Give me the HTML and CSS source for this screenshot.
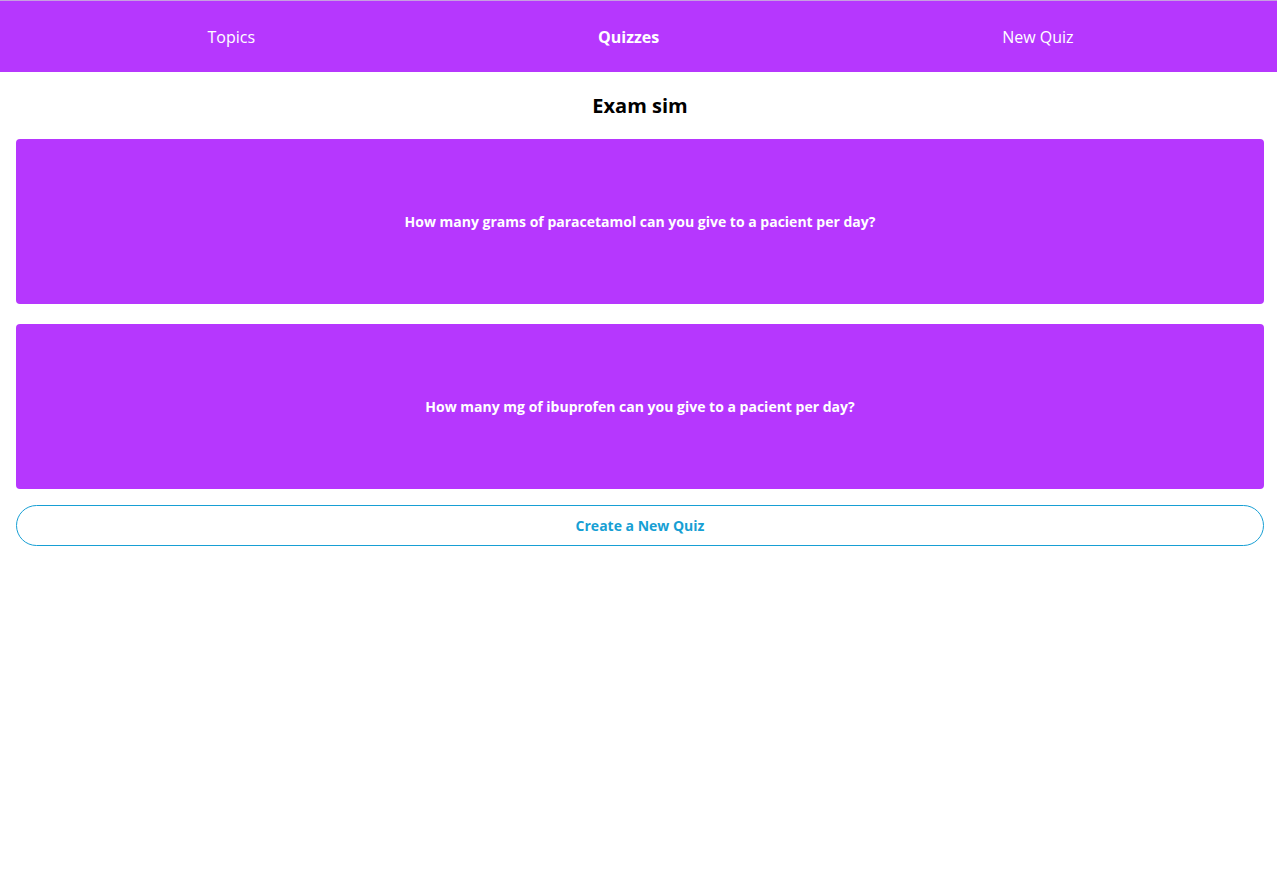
FILE: index.html
```html
<!DOCTYPE html>
<html lang="en">
<head>
<meta charset="utf-8">
<title>Quizzes</title>
<link rel="stylesheet" href="styles.css">
</head>
<body>
<nav class="topnav">
  <a class="nav-item" href="#">Topics</a>
  <a class="nav-item active" href="#">Quizzes</a>
  <a class="nav-item" href="#">New Quiz</a>
</nav>
<main class="content">
  <h2 class="title">Exam sim</h2>
  <div class="card">How many grams of paracetamol can you give to a pacient per day?</div>
  <div class="card">How many mg of ibuprofen can you give to a pacient per day?</div>
  <button class="new-quiz">Create a New Quiz</button>
</main>
</body>
</html>
```
FILE: styles.css
```css
* { box-sizing: border-box; }
html, body {
  margin: 0;
  padding: 0;
  background: #fff;
  font-family: "Open Sans", "Noto Sans", sans-serif;
}
.topnav {
  display: flex;
  align-items: center;
  height: 72px;
  padding: 0 32px 0 36px;
  background: #b637fe;
  border-top: 1px solid #c79fe0;
}
.nav-item {
  flex: 1 1 auto;
  text-align: center;
  color: #fff;
  font-size: 16px;
  text-decoration: none;
}
.nav-item.active { font-weight: 700; }
.content {
  display: flex;
  flex-direction: column;
  padding: 0 13px 0 16px;
}
.title {
  margin: 20px 0;
  text-align: center;
  font-size: 20px;
  line-height: 27px;
  font-weight: 700;
  color: #000;
}
.card {
  display: flex;
  align-items: center;
  justify-content: center;
  height: 165px;
  margin-bottom: 20px;
  border-radius: 4px;
  background: #b637fe;
  color: #fff;
  font-size: 14px;
  font-weight: 700;
}
.card + .card { margin-bottom: 16px; }
.new-quiz {
  height: 41px;
  border: 1px solid #179fd4;
  border-radius: 21px;
  background: #fff;
  color: #179fd4;
  font-family: inherit;
  font-size: 14px;
  font-weight: 700;
}
```
